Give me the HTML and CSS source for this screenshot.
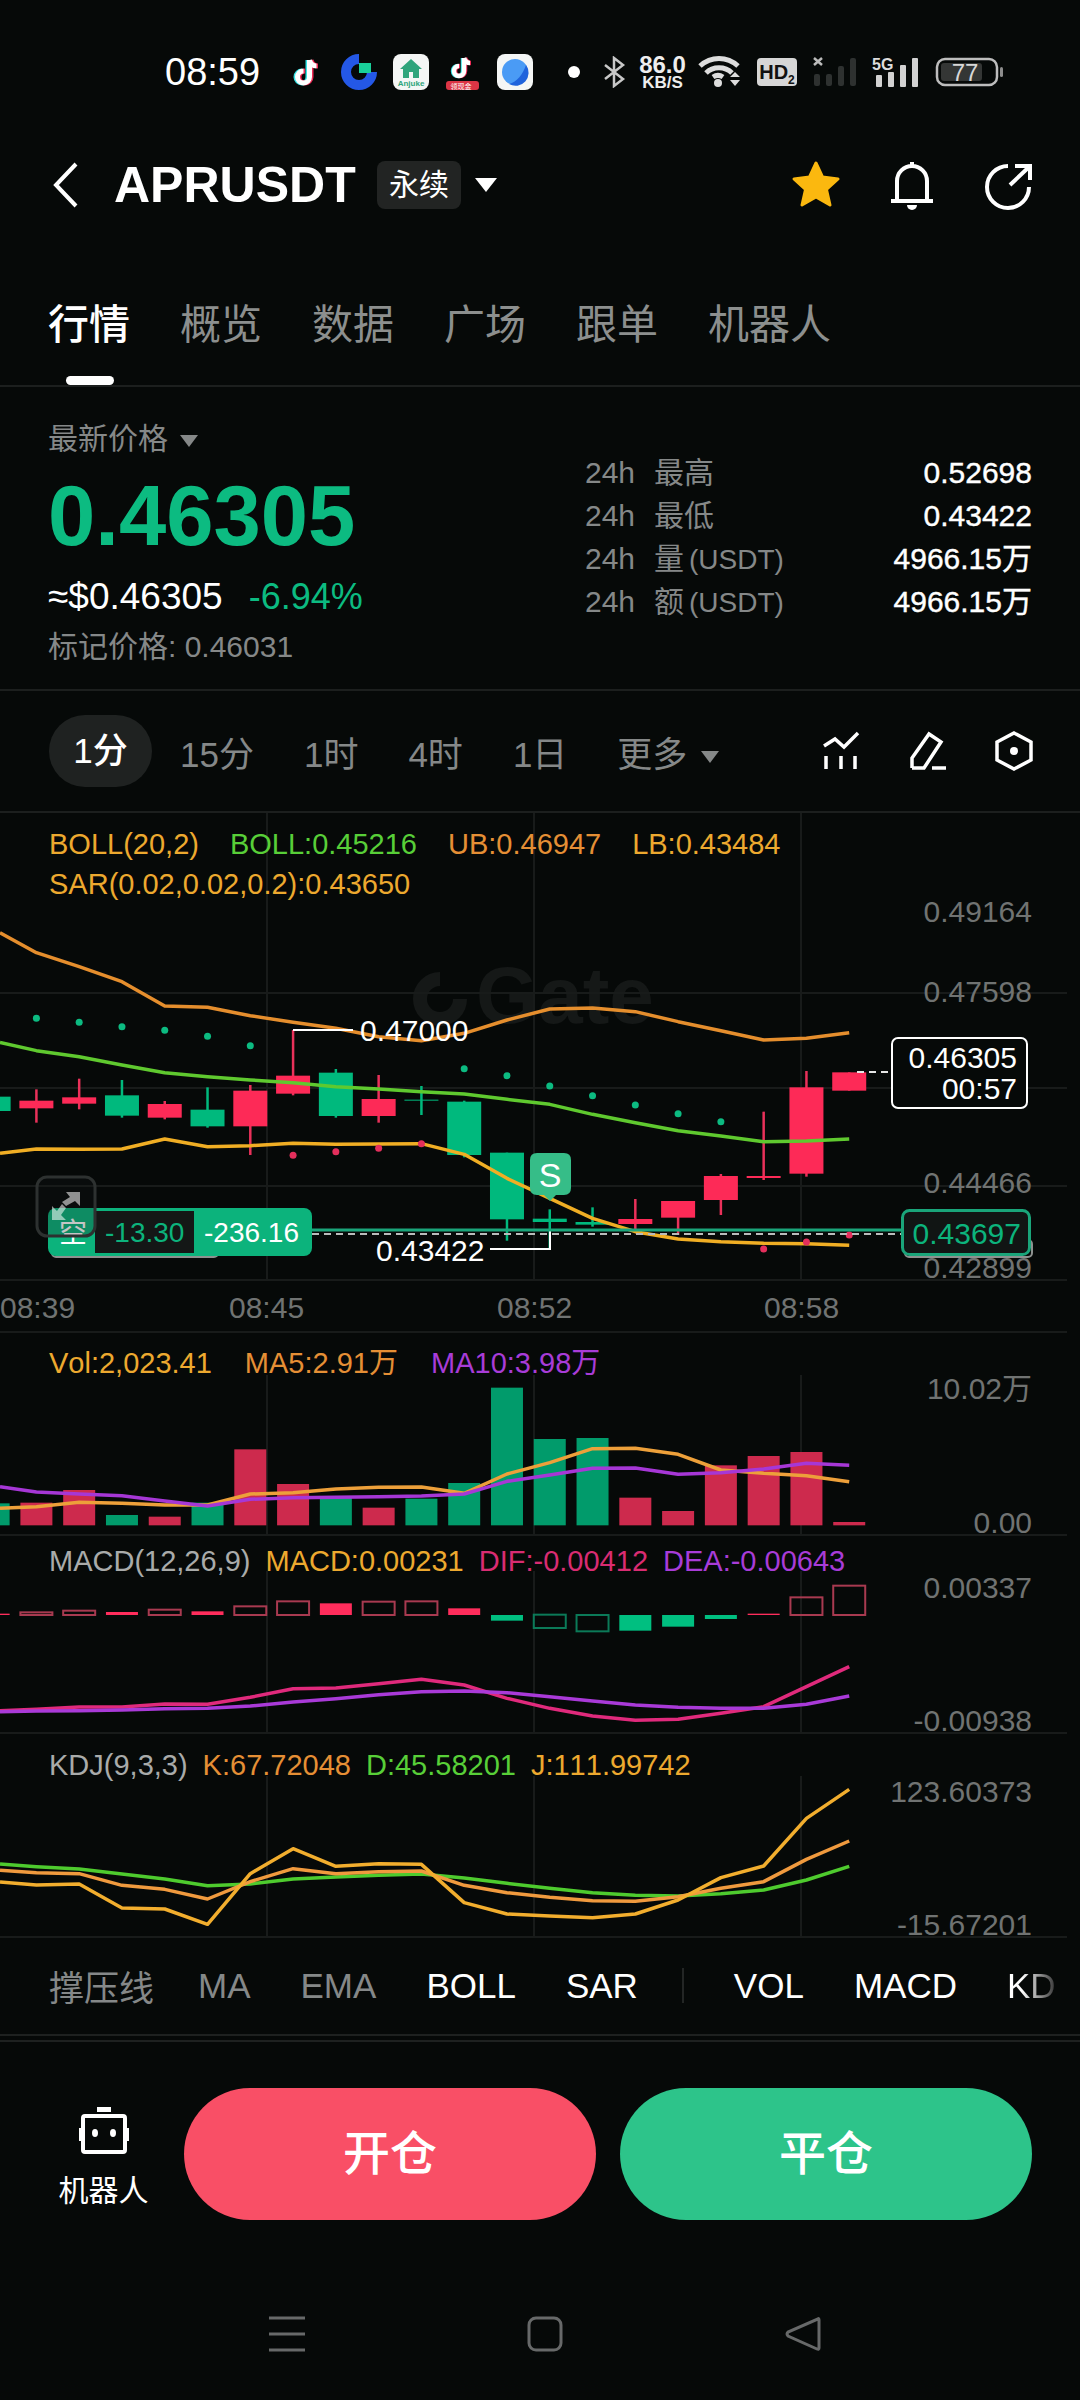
FILE: index.html
```html
<!DOCTYPE html>
<html lang="zh-CN">
<head>
  <meta charset="UTF-8" />
  <title>APRUSDT</title>
  <link rel="stylesheet" href="styles.css">
</head>
<body>

  <div class="status-bar">
    <span class="clock">08:59</span>
    <div class="app-icons">
      <svg class="app" viewBox="0 0 36 36">
        <path class="tk tk-cyan" d="M19 6v17a6 6 0 1 1-6-6"/>
        <path class="tk tk-red" d="M22 6c1 4 4 6 7 6M22 6v17a6 6 0 1 1-6-6"/>
        <path class="tk tk-white" d="M20.500 6c1 4 4 6 7 6M20.500 6v17a6 6 0 1 1-6-6"/>
      </svg>
      <svg class="app" viewBox="0 0 36 36">
        <path class="g-ring" d="M18 5A13 13 0 1 0 31 18"/>
        <rect class="g-square" x="18" y="9" width="12" height="10"/>
      </svg>
      <svg class="app" viewBox="0 0 36 36">
        <rect class="app-tile" width="36" height="36" rx="8"/>
        <path class="house" d="M18 5L29 15H26V24H10V15H7Z"/>
        <rect class="app-tile" x="16" y="18" width="4" height="6"/>
        <text class="anjuke" x="18" y="32">Anjuke</text>
      </svg>
      <svg class="app" viewBox="0 0 36 36">
        <path class="tk tk-cyan tk-small" d="M18 4v13a5 5 0 1 1-5-5"/>
        <path class="tk tk-red tk-small" d="M20 4c1 3 3 5 6 5M20 4v13a5 5 0 1 1-5-5"/>
        <path class="tk tk-white tk-small" d="M19 4c1 3 3 5 6 5M19 4v13a5 5 0 1 1-5-5"/>
        <rect class="tk-banner" x="1" y="27" width="33" height="9" rx="3"/>
        <text class="tk-banner-text" x="16" y="35">领现金</text>
      </svg>
      <svg class="app" viewBox="0 0 36 36">
        <rect class="app-tile" width="36" height="36" rx="8"/>
        <circle class="planet" cx="18" cy="18" r="13"/>
        <path class="planet-shade" d="M29 11A13 13 0 0 1 12 30C20 28 26 20 29 11Z"/>
      </svg>
    </div>
    <div class="sys-icons">
      <div class="dot-box"><span class="dot"></span></div>
      <svg class="sys-bt" viewBox="0 0 25 32">
        <path d="M3 9L21 23L12 30V2L21 9L3 23"/>
      </svg>
      <div class="speed"><span class="speed-num">86.0</span><span class="speed-unit">KB/S</span></div>
      <svg class="sys-wifi" viewBox="0 0 48 32">
        <path class="wifi-arc" d="M2 10C13 0 29 0 40 10M8 17C15 10 27 10 34 17"/>
        <circle cx="20" cy="27" r="4"/>
        <path class="wifi-mid" d="M15 21C18 19 22 19 25 21"/>
        <path d="M32 21L37 16L42 21ZM32 24L37 30L42 24Z"/>
      </svg>
      <div class="hd">HD<sub>2</sub></div>
      <svg class="sys-signal" viewBox="0 0 53 32">
        <path class="sig-x" d="M6 2L14 9M14 2L6 9"/>
        <rect class="sig-off" x="6" y="18" width="6" height="12" rx="2"/>
        <rect class="sig-off" x="18" y="18" width="6" height="12" rx="2"/>
        <rect class="sig-off" x="30" y="10" width="6" height="20" rx="2"/>
        <rect class="sig-off" x="42" y="2" width="6" height="28" rx="2"/>
      </svg>
      <svg class="sys-signal" viewBox="0 0 49 32">
        <text class="sig-5g" x="0" y="14">5G</text>
        <rect class="sig-on" x="4" y="19" width="6" height="12" rx="1"/>
        <rect class="sig-on" x="16" y="16" width="6" height="15" rx="1"/>
        <rect class="sig-on" x="28" y="9" width="6" height="22" rx="1"/>
        <rect class="sig-on" x="40" y="2" width="6" height="29" rx="1"/>
      </svg>
      <svg class="sys-battery" viewBox="0 0 73 32">
        <rect class="bat-shell" x="5" y="3" width="60" height="26" rx="8"/>
        <rect class="bat-fill" x="9" y="7" width="41" height="18" rx="3"/>
        <rect class="bat-nub" x="68" y="11" width="3" height="10" rx="1.500"/>
        <text class="bat-text" x="33" y="25">77</text>
      </svg>
    </div>
  </div>

  <div class="top-bar">
    <svg class="back" viewBox="0 0 28 46"><path d="M24 2L4 23L24 44"/></svg>
    <span class="symbol">APRUSDT</span>
    <span class="badge">永续</span>
    <span class="caret caret-white"></span>
    <div class="top-actions">
      <svg class="top-icon" viewBox="0 0 52 52">
        <polygon class="star" points="26,4 32.500,18 48,20 36.500,30.500 40,46 26,38 12,46 15.500,30.500 4,20 19.500,18"/>
      </svg>
      <svg class="top-icon" viewBox="0 0 52 52">
        <path class="line-icon" d="M11 42V22a15 15 0 0 1 30 0V42M5 42H47M26 7V3"/>
        <path class="bell-clapper" d="M21 46H31A5 5 0 0 1 21 46Z"/>
      </svg>
      <svg class="top-icon" viewBox="0 0 52 52">
        <path class="line-icon" d="M26 7A21 21 0 1 0 47 28M28 26L47 8M33 7H48V21"/>
      </svg>
    </div>
  </div>

  <div class="tabs">
    <span class="tab active">行情</span>
    <span class="tab">概览</span>
    <span class="tab">数据</span>
    <span class="tab">广场</span>
    <span class="tab">跟单</span>
    <span class="tab">机器人</span>
  </div>

  <div class="ticker">
    <div class="ticker-left">
      <div class="price-label">最新价格 <span class="caret caret-gray"></span></div>
      <div class="last-price">0.46305</div>
      <div class="price-sub"><span class="usd">≈$0.46305</span><span class="change">-6.94%</span></div>
      <div class="mark-price">标记价格: 0.46031</div>
    </div>
    <div class="ticker-right">
      <div class="stat"><span class="stat-h">24h</span><span class="stat-name">最高</span><span class="stat-val">0.52698</span></div>
      <div class="stat"><span class="stat-h">24h</span><span class="stat-name">最低</span><span class="stat-val">0.43422</span></div>
      <div class="stat"><span class="stat-h">24h</span><span class="stat-name">量<span class="stat-unit">(USDT)</span></span><span class="stat-val">4966.15万</span></div>
      <div class="stat"><span class="stat-h">24h</span><span class="stat-name">额<span class="stat-unit">(USDT)</span></span><span class="stat-val">4966.15万</span></div>
    </div>
  </div>

  <div class="timeframes">
    <span class="tf tf-active">1分</span>
    <span class="tf">15分</span>
    <span class="tf">1时</span>
    <span class="tf">4时</span>
    <span class="tf">1日</span>
    <span class="tf tf-more">更多 <span class="caret caret-gray"></span></span>
    <div class="tf-tools">
      <svg class="tool" viewBox="0 0 38 40">
        <path d="M1 15L12 8L21 16L35 2M3 25V38M18 25V38M32 25V38"/>
      </svg>
      <svg class="tool" viewBox="0 0 38 40">
        <path d="M3 37V27L20 3L32 11L15 37H3M23 37H37"/>
      </svg>
      <svg class="tool" viewBox="0 0 38 40">
        <path d="M19 2L36 11V29L19 38L2 29V11Z"/>
        <circle class="tool-dot" cx="19" cy="20" r="4"/>
      </svg>
    </div>
  </div>

  <div class="pane pane-main">
    <svg class="pane-svg" id="svg-main" viewBox="0 813 1080 519">
      <g class="watermark">
        <path class="wm-ring" d="M440 979A20 20 0 1 0 460 999"/>
        <text class="wm-text" x="476" y="1023">Gate</text>
      </g>
      <g id="main-grid"></g>
      <g id="main-candles"></g>
      <g id="main-lines"></g>
      <g id="main-dots"></g>

      <text class="ax" x="1032" y="922">0.49164</text>
      <text class="ax" x="1032" y="1002">0.47598</text>
      <text class="ax" x="1032" y="1193">0.44466</text>
      <text class="ax" x="1032" y="1278">0.42899</text>
      <text class="ax ax-start" x="0" y="1318">08:39</text>
      <text class="ax ax-start" x="229" y="1318">08:45</text>
      <text class="ax ax-start" x="497" y="1318">08:52</text>
      <text class="ax ax-start" x="764" y="1318">08:58</text>

      <path class="mark-line" d="M293 1030H353M490 1249H550V1230"/>
      <text class="mark-text" x="360" y="1041">0.47000</text>
      <text class="mark-text" x="376" y="1261">0.43422</text>

      <path class="bubble" d="M537 1153H564Q571 1153 571 1160V1188Q571 1195 564 1195H556L550 1201L544 1195H537Q530 1195 530 1188V1160Q530 1153 537 1153Z"/>
      <text class="bubble-text" x="550" y="1187">S</text>

      <path class="pos-line" d="M310 1230H905"/>
      <path class="pos-dash" d="M312 1234H902"/>
      <path class="last-dash" d="M857 1072H892"/>

      <rect class="pos-shadow" x="52" y="1240" width="166" height="17" rx="4"/>
      <rect class="pos-tag" x="48" y="1208" width="264" height="48" rx="8"/>
      <rect class="pos-inner" x="95" y="1211" width="99" height="42"/>
      <text class="pos-side" x="59" y="1243">空</text>
      <text class="pos-pnl" x="105" y="1242">-13.30</text>
      <text class="pos-total" x="204" y="1242">-236.16</text>

      <rect class="expand" x="37" y="1177" width="58" height="59" rx="10"/>
      <path class="expand-arrow" d="M66 1192H80V1206L75 1201L66 1206L62 1202L70 1197ZM66 1220H52V1206L57 1211L62 1204L66 1208L61 1215Z"/>

      <rect class="box-shadow" x="905" y="1240" width="127" height="17" rx="4"/>
      <rect class="box-pos" x="902.500" y="1210.500" width="127" height="44" rx="7"/>
      <text class="box-pos-text" x="1021" y="1244">0.43697</text>
      <rect class="box-last" x="892" y="1038" width="135" height="70" rx="6"/>
      <text class="box-last-text" x="1017" y="1068">0.46305</text>
      <text class="box-last-text" x="1017" y="1099">00:57</text>
    </svg>
    <div class="legend legend-main">
      <div class="legend-row">
        <span class="c-yellow">BOLL(20,2)</span>
        <span class="c-green">BOLL:0.45216</span>
        <span class="c-orange">UB:0.46947</span>
        <span class="c-yellow">LB:0.43484</span>
      </div>
      <div class="legend-row">
        <span class="c-yellow">SAR(0.02,0.02,0.2):0.43650</span>
      </div>
    </div>
  </div>

  <div class="pane pane-vol">
    <svg class="pane-svg" id="svg-vol" viewBox="0 1332 1080 203">
      <g id="vol-grid"></g>
      <g id="vol-bars"></g>
      <g id="vol-lines"></g>
      <text class="ax" x="1032" y="1399">10.02万</text>
      <text class="ax" x="1032" y="1533">0.00</text>
    </svg>
    <div class="legend legend-vol">
      <div class="legend-row">
        <span class="c-yellow">Vol:2,023.41</span>
        <span class="c-orange">MA5:2.91万</span>
        <span class="c-purple">MA10:3.98万</span>
      </div>
    </div>
  </div>

  <div class="pane pane-macd">
    <svg class="pane-svg" id="svg-macd" viewBox="0 1535 1080 198">
      <g id="macd-grid"></g>
      <g id="macd-bars"></g>
      <g id="macd-lines"></g>
      <text class="ax" x="1032" y="1598">0.00337</text>
      <text class="ax" x="1032" y="1731">-0.00938</text>
    </svg>
    <div class="legend legend-macd">
      <div class="legend-row">
        <span class="c-gray">MACD(12,26,9)</span>
        <span class="c-yellow">MACD:0.00231</span>
        <span class="c-pink">DIF:-0.00412</span>
        <span class="c-purple">DEA:-0.00643</span>
      </div>
    </div>
  </div>

  <div class="pane pane-kdj">
    <svg class="pane-svg" id="svg-kdj" viewBox="0 1733 1080 204">
      <g id="kdj-grid"></g>
      <g id="kdj-lines"></g>
      <text class="ax" x="1032" y="1802">123.60373</text>
      <text class="ax" x="1032" y="1935">-15.67201</text>
    </svg>
    <div class="legend legend-kdj">
      <div class="legend-row">
        <span class="c-gray">KDJ(9,3,3)</span>
        <span class="c-orange">K:67.72048</span>
        <span class="c-green">D:45.58201</span>
        <span class="c-yellow">J:111.99742</span>
      </div>
    </div>
  </div>

  <div class="indicators">
    <span class="ind ind-first">撑压线</span>
    <span class="ind ind-ma">MA</span>
    <span class="ind">EMA</span>
    <span class="ind ind-on">BOLL</span>
    <span class="ind ind-on">SAR</span>
    <span class="ind-divider"></span>
    <span class="ind ind-on">VOL</span>
    <span class="ind ind-on">MACD</span>
    <span class="ind ind-fade">KD</span>
  </div>
  <div class="double-rule"></div>

  <div class="actions">
    <div class="bot">
      <svg class="bot-icon" viewBox="0 0 50 47">
        <rect class="bot-antenna" x="18" y="0" width="14" height="5"/>
        <rect class="bot-head" x="4" y="9" width="42" height="36" rx="2"/>
        <rect class="bot-antenna" x="0" y="21" width="3" height="13"/>
        <rect class="bot-antenna" x="47" y="21" width="3" height="13"/>
        <ellipse class="bot-antenna" cx="16" cy="26" rx="3" ry="4"/>
        <ellipse class="bot-antenna" cx="34" cy="26" rx="3" ry="4"/>
      </svg>
      <span class="bot-label">机器人</span>
    </div>
    <div class="trade-btn btn-open">开仓</div>
    <div class="trade-btn btn-close">平仓</div>
  </div>

  <div class="nav-bar">
    <svg class="nav-icon" viewBox="0 0 36 36"><path d="M0 2H36M0 18H36M0 34H36"/></svg>
    <svg class="nav-icon" viewBox="0 0 36 36"><rect x="2" y="2" width="32" height="32" rx="7"/></svg>
    <svg class="nav-icon" viewBox="0 0 36 36"><path d="M33 3Q34 2 34 4V32Q34 34 32 33L3 20Q1 18 3 16Z"/></svg>
  </div>

  <script src="chart.js"></script>
</body>
</html>
```

FILE: styles.css
```css
* {
  box-sizing: border-box;
}

body {
  font-family: "Liberation Sans", "Noto Sans CJK SC", sans-serif;
  font-kerning: none;
  background-color: #060908;
  color: #fff;
  margin: 0;
  width: 1080px;
  height: 2400px;
  overflow: hidden;
}

/* status bar */
.status-bar {
  display: flex;
  align-items: center;
  height: 44px;
  margin-top: 50px;
  padding-left: 165px;
}

.clock {
  width: 124px;
  font-size: 38px;
}

.app-icons {
  display: flex;
  gap: 16px;
  margin-right: 24px;
}

.app {
  width: 36px;
  height: 36px;
}

.tk {
  fill: none;
  stroke-width: 5;
}

.tk-small {
  stroke-width: 4.500;
}

.tk-cyan {
  stroke: #35e3e6;
}

.tk-red {
  stroke: #f02a55;
}

.tk-white {
  stroke: #fff;
}

.g-ring {
  fill: none;
  stroke: #2458e6;
  stroke-width: 10;
}

.g-square {
  fill: #19d09a;
}

.app-tile {
  fill: #f4f6f5;
}

.house {
  fill: #2fa57c;
}

.anjuke {
  font-size: 8px;
  font-weight: 700;
  fill: #2fa57c;
  text-anchor: middle;
}

.tk-banner {
  fill: #dc3545;
}

.tk-banner-text {
  font-size: 7px;
  fill: #fff;
  text-anchor: middle;
}

.planet {
  fill: #4a9bf5;
}

.planet-shade {
  fill: #1f63dc;
}

.sys-icons {
  display: flex;
  align-items: center;
  gap: 11px;
}

.dot-box {
  display: flex;
  justify-content: center;
  width: 34px;
}

.dot {
  width: 12px;
  height: 12px;
  border-radius: 50%;
  background-color: #fff;
}

.sys-bt {
  width: 25px;
  height: 32px;
  fill: none;
  stroke: #c8c8c8;
  stroke-width: 2.500;
}

.speed {
  display: flex;
  flex-direction: column;
  align-items: center;
  width: 49px;
  font-weight: 700;
  color: #eee;
}

.speed-num {
  font-size: 24px;
  line-height: 20px;
}

.speed-unit {
  font-size: 17px;
  line-height: 15px;
}

.sys-wifi {
  width: 48px;
  height: 32px;
  fill: #ddd;
}

.wifi-arc,
.wifi-mid {
  fill: none;
  stroke: #ddd;
  stroke-width: 5;
}

.hd {
  width: 40px;
  height: 28px;
  border-radius: 4px;
  background-color: #d6d6d6;
  color: #111;
  font-size: 20px;
  font-weight: 700;
  line-height: 28px;
  text-align: center;
}

.hd sub {
  font-size: 12px;
  line-height: 0;
}

.sys-signal {
  width: 53px;
  height: 32px;
}

.sys-signal + .sys-signal {
  width: 49px;
}

.sig-x {
  fill: none;
  stroke: #bbb;
  stroke-width: 2.500;
}

.sig-off {
  fill: #2e3130;
}

.sig-on {
  fill: #d2d2d2;
}

.sig-5g {
  font-size: 16px;
  font-weight: 700;
  fill: #ddd;
}

.sys-battery {
  width: 73px;
  height: 32px;
}

.bat-shell {
  fill: none;
  stroke: #bdbdbd;
  stroke-width: 2.500;
}

.bat-fill {
  fill: #343635;
}

.bat-nub {
  fill: #8d8d8d;
}

.bat-text {
  font-size: 24px;
  fill: #d8d8d8;
  text-anchor: middle;
}

/* title row */
.top-bar {
  display: flex;
  align-items: center;
  height: 52px;
  margin-top: 65px;
  padding: 0 46px 0 52px;
}

.back {
  width: 28px;
  height: 46px;
  fill: none;
  stroke: #fff;
  stroke-width: 4;
  margin-right: 34px;
}

.symbol {
  width: 243px;
  font-size: 50px;
  font-weight: 700;
  margin-right: 20px;
  white-space: nowrap;
}

.badge {
  width: 84px;
  height: 48px;
  border-radius: 8px;
  background-color: #222423;
  font-size: 30px;
  line-height: 48px;
  text-align: center;
  margin-right: 14px;
}

.caret {
  display: inline-block;
  width: 0;
  height: 0;
  border-left: 11px solid transparent;
  border-right: 11px solid transparent;
}

.caret-white {
  border-top: 14px solid #fff;
}

.caret-gray {
  border-left-width: 9px;
  border-right-width: 9px;
  border-top: 12px solid #858888;
  margin-left: 4px;
  vertical-align: middle;
}

.top-actions {
  display: flex;
  gap: 44px;
  margin-left: auto;
}

.top-icon {
  width: 52px;
  height: 52px;
}

.star {
  fill: #fbb80f;
  stroke: #fbb80f;
  stroke-width: 3;
  stroke-linejoin: round;
}

.line-icon {
  fill: none;
  stroke: #fff;
  stroke-width: 4;
}

.bell-clapper {
  fill: #fff;
}

/* main tabs */
.tabs {
  display: flex;
  gap: 50px;
  height: 176px;
  padding: 87px 0 0 48px;
  border-bottom: 2px solid #1c1f1e;
  font-size: 41px;
  line-height: 54px;
  color: #8c8f8e;
}

.tab {
  position: relative;
  height: 87px;
}

.active {
  color: #fff;
  font-weight: 500;
}

.active::after {
  content: "";
  position: absolute;
  left: 18px;
  bottom: 0;
  width: 48px;
  height: 9px;
  border-radius: 5px;
  background-color: #fff;
}

/* price block */
.ticker {
  display: flex;
  justify-content: space-between;
  height: 304px;
  padding: 32px 48px 0;
  border-bottom: 2px solid #1c1f1e;
}

.price-label {
  font-size: 30px;
  line-height: 40px;
  color: #858888;
}

.last-price {
  font-size: 85px;
  font-weight: 700;
  line-height: 90px;
  margin-top: 12px;
  color: #0cbb81;
}

.price-sub {
  display: flex;
  gap: 26px;
  margin-top: 16px;
  font-size: 36px;
  line-height: 40px;
}

.usd {
  font-size: 37px;
}

.change {
  color: #0cbb81;
}

.mark-price {
  font-size: 30px;
  line-height: 36px;
  margin-top: 12px;
  color: #858888;
}

.ticker-right {
  width: 447px;
  padding-top: 32px;
  font-size: 30px;
}

.stat {
  display: flex;
  height: 43px;
  line-height: 43px;
  white-space: nowrap;
}

.stat-h {
  width: 69px;
  color: #858888;
}

.stat-name {
  color: #858888;
}

.stat-unit {
  margin-left: 5px;
  font-size: 28px;
}

.stat-val {
  margin-left: auto;
  -webkit-text-stroke: 0.4px #fff;
}

/* timeframe row */
.timeframes {
  display: flex;
  align-items: center;
  gap: 50px;
  height: 122px;
  padding: 0 47px 0 49px;
  border-bottom: 2px solid #1c1f1e;
  font-size: 35px;
  color: #858888;
}

.tf-active {
  width: 103px;
  height: 72px;
  margin-right: -22px;
  border-radius: 36px;
  background-color: #1f2221;
  color: #fff;
  line-height: 72px;
  text-align: center;
  font-weight: 500;
}

.tf-more {
  white-space: nowrap;
}

.tf-tools {
  display: flex;
  gap: 48px;
  margin-left: auto;
}

.tool {
  width: 38px;
  height: 40px;
  fill: none;
  stroke: #fff;
  stroke-width: 3.500;
}

.tool-dot {
  fill: #fff;
  stroke: none;
}

/* chart panes */
.pane {
  position: relative;
}

.pane-main {
  height: 519px;
  padding-top: 11px;
}

.pane-vol {
  height: 203px;
  padding-top: 11px;
}

.pane-macd {
  height: 198px;
  padding-top: 6px;
}

.pane-kdj {
  height: 204px;
  padding-top: 12px;
}

.pane-svg {
  position: absolute;
  left: 0;
  top: 0;
  width: 1080px;
  height: 100%;
  overflow: visible;
}

.legend {
  position: relative;
  padding-left: 49px;
  font-size: 29px;
  line-height: 40px;
}

.legend-row {
  display: flex;
  gap: 31px;
  white-space: nowrap;
}

.legend-vol .legend-row {
  gap: 33px;
}

.legend-macd .legend-row,
.legend-kdj .legend-row {
  gap: 15px;
}

.c-yellow {
  color: #eda92f;
}

.c-green {
  color: #58cf38;
}

.c-orange {
  color: #e58f35;
}

.c-purple {
  color: #a83cd8;
}

.c-pink {
  color: #d92c72;
}

.c-gray {
  color: #a9abaa;
}

.ax {
  font-size: 30px;
  fill: #707372;
  text-anchor: end;
}

.ax-start {
  text-anchor: start;
}

.grid-line {
  stroke: #181b1a;
  stroke-width: 2;
}

.wm-ring {
  fill: none;
  stroke: #151817;
  stroke-width: 14;
}

.wm-text {
  font-size: 80px;
  font-weight: 700;
  fill: #151817;
}

.up {
  fill: #00b97d;
}

.down {
  fill: #fd2a57;
}

.wick-up {
  stroke: #00b97d;
  stroke-width: 2.500;
}

.wick-down {
  stroke: #e9315a;
  stroke-width: 2.500;
}

.dot-up {
  fill: #0cbb81;
}

.dot-down {
  fill: #e42f5c;
}

.vol-up {
  fill: #019b6b;
}

.vol-down {
  fill: #cd2a4d;
}

.hist-up {
  fill: #ff2d5c;
}

.hist-down {
  fill: #00bf80;
}

.hist-up-hollow {
  fill: none;
  stroke: #a83a50;
  stroke-width: 2;
}

.hist-down-hollow {
  fill: none;
  stroke: #0b7a58;
  stroke-width: 2;
}

.series {
  fill: none;
  stroke-width: 3.500;
  stroke-linejoin: round;
}

.s-ub {
  stroke: #e58e2d;
}

.s-boll {
  stroke: #5fc92f;
}

.s-lb {
  stroke: #f0ae24;
}

.s-ma5 {
  stroke: #eda03a;
}

.s-ma10 {
  stroke: #a637d6;
}

.s-dif {
  stroke: #e02a7c;
}

.s-dea {
  stroke: #a93ad8;
}

.s-k {
  stroke: #f09a3e;
}

.s-d {
  stroke: #4ecb2e;
}

.s-j {
  stroke: #f2ae2e;
}

.mark-line {
  fill: none;
  stroke: #fff;
  stroke-width: 2;
}

.mark-text {
  font-size: 30px;
  fill: #fff;
}

.bubble {
  fill: #36bd88;
}

.bubble-text {
  font-size: 34px;
  fill: #fff;
  text-anchor: middle;
}

.pos-line {
  stroke: #1aa57a;
  stroke-width: 3;
}

.pos-dash {
  stroke: #b9bcbb;
  stroke-width: 2;
  stroke-dasharray: 7 5;
}

.last-dash {
  stroke: #e6e6e6;
  stroke-width: 2;
  stroke-dasharray: 7 5;
}

.pos-shadow,
.box-shadow {
  fill: none;
  stroke: #8d918f;
  stroke-width: 2;
}

.pos-tag {
  fill: #0cb37c;
}

.pos-inner {
  fill: #141716;
}

.pos-side {
  font-size: 28px;
  fill: #fff;
}

.pos-pnl {
  font-size: 28px;
  fill: #0cb37c;
}

.pos-total {
  font-size: 28px;
  fill: #fff;
}

.expand {
  fill: rgba(20, 24, 23, 0.25);
  stroke: #2d3130;
  stroke-width: 3;
}

.expand-arrow {
  fill: rgba(255, 255, 255, 0.55);
}

.box-pos {
  fill: #111514;
  stroke: #1aa57a;
  stroke-width: 3;
}

.box-pos-text {
  font-size: 30px;
  fill: #0cb37c;
  text-anchor: end;
}

.box-last {
  fill: #060908;
  stroke: #fff;
  stroke-width: 2;
}

.box-last-text {
  font-size: 30px;
  fill: #fff;
  text-anchor: end;
}

/* indicator switcher */
.indicators {
  display: flex;
  align-items: center;
  gap: 50px;
  height: 97px;
  padding-left: 49px;
  font-size: 35px;
  color: #858888;
  white-space: nowrap;
}

.ind-ma {
  margin-left: -6px;
}

.ind-on {
  color: #fff;
}

.ind-fade {
  background: linear-gradient(90deg, #fff 30%, #333 100%);
  -webkit-background-clip: text;
  background-clip: text;
  color: transparent;
}

.ind-divider {
  width: 2px;
  height: 35px;
  margin-left: -6px;
  background-color: #232625;
}

.double-rule {
  height: 8px;
  border-top: 2px solid #1e2120;
  border-bottom: 2px solid #1e2120;
}

/* buttons */
.actions {
  display: flex;
  gap: 24px;
  padding: 46px 48px 0;
}

.bot {
  display: flex;
  flex-direction: column;
  align-items: center;
  width: 113px;
  margin-left: -1px;
  padding-top: 19px;
}

.bot-icon {
  width: 50px;
  height: 47px;
}

.bot-antenna {
  fill: #fff;
}

.bot-head {
  fill: none;
  stroke: #fff;
  stroke-width: 4;
}

.bot-label {
  font-size: 30px;
  line-height: 40px;
  margin-top: 17px;
}

.trade-btn {
  flex: 1;
  height: 132px;
  border-radius: 66px;
  font-size: 47px;
  font-weight: 500;
  line-height: 132px;
  text-align: center;
}

.btn-open {
  background-color: #f94f66;
}

.btn-close {
  background-color: #2dc48a;
}

/* system nav */
.nav-bar {
  display: flex;
  gap: 222px;
  margin-top: 96px;
  padding-left: 269px;
}

.nav-icon {
  width: 36px;
  height: 36px;
  fill: none;
  stroke: #676969;
  stroke-width: 3;
}
```

FILE: chart.js
```js
const NS = 'http://www.w3.org/2000/svg';
const X = i => 36.4 + 42.78 * i;
const BODY_W = 34;
const BAR_W = 32;

function add(parentId, tag, attrs) {
  const el = document.createElementNS(NS, tag);
  Object.keys(attrs).forEach(k => el.setAttribute(k, attrs[k]));
  document.getElementById(parentId).appendChild(el);
  return el;
}

function grid(id, top, bottom, rows) {
  [267, 534, 801].forEach(x => {
    add(id, 'line', { class: 'grid-line', x1: x, x2: x, y1: top, y2: bottom });
  });
  rows.forEach(y => {
    add(id, 'line', { class: 'grid-line', x1: 0, x2: 1067, y1: y, y2: y });
  });
}

// points are read from the screenshot at 3x height, first value is at x=0
function series(id, cls, base, values) {
  const pts = values.map((v, n) => {
    const x = n === 0 ? 0 : X(n - 1);
    return x + ',' + (base + v / 3);
  });
  add(id, 'polyline', { class: 'series ' + cls, points: pts.join(' ') });
}

/* ---- main chart ---- */
grid('main-grid', 813, 1280, [993, 1088, 1186, 1280]);

// i, up/down, body top, body bottom, wick top, wick bottom
const candles = [
  [-1, 'up', 290, 333, 290, 333],
  [0, 'down', 302, 325, 268, 368],
  [1, 'down', 292, 311, 236, 328],
  [2, 'up', 286, 347, 240, 353],
  [3, 'down', 312, 353, 303, 358],
  [4, 'up', 329, 379, 262, 383],
  [5, 'down', 272, 379, 255, 465],
  [6, 'down', 227, 281, 90, 286],
  [7, 'up', 218, 348, 207, 353],
  [8, 'down', 297, 348, 225, 368],
  [9, 'up', 299, 302, 258, 345],
  [10, 'up', 305, 465, 302, 472],
  [11, 'up', 458, 658, 458, 722],
  [12, 'up', 656, 666, 628, 745],
  [13, 'up', 666, 674, 622, 680],
  [14, 'down', 657, 672, 597, 690],
  [15, 'down', 603, 653, 603, 705],
  [16, 'down', 528, 600, 522, 645],
  [17, 'down', 528, 534, 335, 540],
  [18, 'down', 262, 521, 213, 530],
  [19, 'down', 217, 272, 217, 272]
];

candles.forEach(c => {
  const x = X(c[0]);
  add('main-candles', 'line', {
    class: 'wick-' + c[1], x1: x, x2: x, y1: 1000 + c[4] / 3, y2: 1000 + c[5] / 3
  });
  add('main-candles', 'rect', {
    class: c[1], x: x - BODY_W / 2, y: 1000 + c[2] / 3, width: BODY_W, height: (c[3] - c[2]) / 3
  });
});

series('main-lines', 's-ub', 820, [338, 398, 440, 485, 558, 562, 587, 607, 625, 650, 662, 640, 600, 567, 564, 575, 605, 632, 660, 655, 638]);
series('main-lines', 's-boll', 820, [667, 692, 710, 735, 758, 770, 780, 788, 800, 807, 815, 822, 838, 853, 883, 908, 932, 948, 965, 963, 957]);
series('main-lines', 's-lb', 820, [1000, 987, 988, 987, 957, 980, 977, 970, 973, 972, 971, 1003, 1075, 1135, 1195, 1235, 1257, 1265, 1270, 1271, 1276]);

const sarUp = [[0, 595], [1, 607], [2, 620], [3, 631], [4, 649], [5, 677], [10, 746], [11, 767], [12, 798], [13, 827], [14, 855], [15, 881], [16, 905]];
const sarDown = [[6, 1006], [7, 995], [8, 985], [9, 971], [17, 1287], [18, 1266], [19, 1245]];

sarUp.forEach(d => {
  add('main-dots', 'circle', { class: 'dot-up', cx: X(d[0]), cy: 820 + d[1] / 3, r: 3.5 });
});
sarDown.forEach(d => {
  add('main-dots', 'circle', { class: 'dot-down', cx: X(d[0]), cy: 820 + d[1] / 3, r: 3.5 });
});

/* ---- volume ---- */
grid('vol-grid', 1375, 1535, [1535]);
add('vol-grid', 'line', { class: 'grid-line', x1: 0, x2: 1067, y1: 1332, y2: 1332 });

const volumes = [
  [-1, 'up', 550], [0, 'down', 548], [1, 'down', 510], [2, 'up', 585], [3, 'down', 590],
  [4, 'up', 548], [5, 'down', 388], [6, 'down', 492], [7, 'up', 533], [8, 'down', 563],
  [9, 'up', 536], [10, 'up', 489], [11, 'up', 203], [12, 'up', 357], [13, 'up', 354],
  [14, 'down', 533], [15, 'down', 573], [16, 'down', 436], [17, 'down', 408], [18, 'down', 396],
  [19, 'down', 606]
];

volumes.forEach(v => {
  add('vol-bars', 'rect', {
    class: 'vol-' + v[1], x: X(v[0]) - BAR_W / 2, y: 1320 + v[2] / 3, width: BAR_W, height: (616 - v[2]) / 3
  });
});

series('vol-lines', 's-ma5', 1320, [565, 560, 547, 550, 555, 555, 522, 518, 507, 502, 501, 520, 462, 428, 386, 385, 403, 450, 460, 467, 485]);
series('vol-lines', 's-ma10', 1320, [500, 516, 522, 527, 543, 558, 538, 533, 532, 530, 528, 522, 484, 465, 445, 444, 463, 458, 447, 430, 436]);

/* ---- macd ---- */
grid('macd-grid', 1571, 1733, [1733]);

// i, class, top, bottom
const hist = [
  [-1, 'hist-up', 881, 885], [0, 'hist-up-hollow', 877, 885], [1, 'hist-up-hollow', 872, 885],
  [2, 'hist-up', 876, 885], [3, 'hist-up-hollow', 869, 885], [4, 'hist-up', 874, 885],
  [5, 'hist-up-hollow', 859, 885], [6, 'hist-up-hollow', 844, 885], [7, 'hist-up', 850, 885],
  [8, 'hist-up-hollow', 845, 885], [9, 'hist-up-hollow', 844, 885], [10, 'hist-up', 865, 885],
  [11, 'hist-down', 885, 902], [12, 'hist-down-hollow', 884, 924], [13, 'hist-down-hollow', 885, 934],
  [14, 'hist-down', 885, 932], [15, 'hist-down', 885, 920], [16, 'hist-down', 885, 897],
  [17, 'hist-up', 881, 885], [18, 'hist-up-hollow', 832, 885], [19, 'hist-up-hollow', 797, 885]
];

hist.forEach(h => {
  add('macd-bars', 'rect', {
    class: h[1], x: X(h[0]) - BAR_W / 2, y: 1320 + h[2] / 3, width: BAR_W, height: (h[3] - h[2]) / 3
  });
});

series('macd-lines', 's-dif', 1320, [1172, 1168, 1161, 1161, 1152, 1153, 1132, 1106, 1104, 1091, 1078, 1095, 1135, 1165, 1188, 1201, 1198, 1180, 1160, 1100, 1040]);
series('macd-lines', 's-dea', 1320, [1175, 1173, 1172, 1170, 1166, 1165, 1158, 1146, 1136, 1124, 1115, 1113, 1118, 1130, 1143, 1155, 1162, 1165, 1165, 1153, 1128]);

/* ---- kdj ---- */
grid('kdj-grid', 1776, 1937, [1937]);

series('kdj-lines', 's-d', 1730, [402, 410, 417, 432, 447, 467, 462, 447, 441, 436, 432, 444, 460, 475, 488, 496, 498, 491, 480, 450, 409]);
series('kdj-lines', 's-k', 1730, [421, 428, 431, 466, 478, 507, 455, 416, 431, 425, 423, 466, 488, 502, 512, 514, 500, 475, 455, 388, 333]);
series('kdj-lines', 's-j', 1730, [456, 465, 462, 534, 537, 583, 431, 356, 409, 401, 403, 518, 552, 558, 563, 552, 510, 443, 408, 265, 178]);
```
